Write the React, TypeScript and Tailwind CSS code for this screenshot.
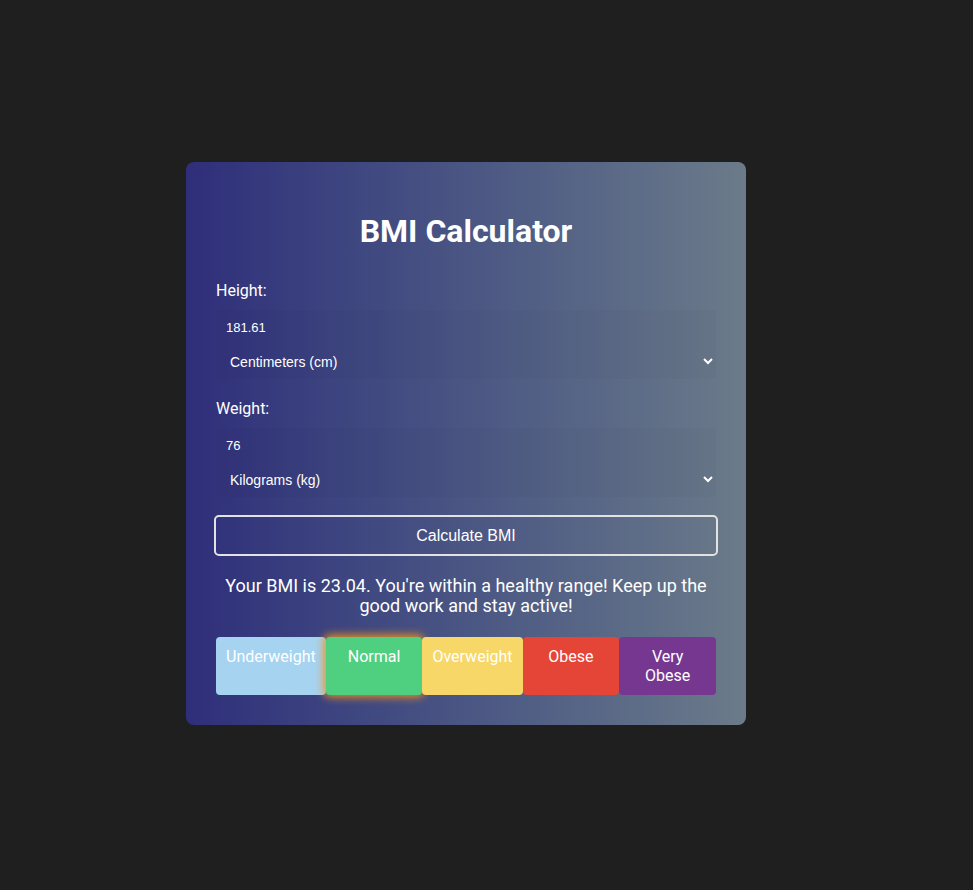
import { useState } from 'react';

const categories = [
  { label: 'Underweight', bg: 'bg-[#a6d3f0]', active: false },
  { label: 'Normal', bg: 'bg-[#4fcf80]', active: true },
  { label: 'Overweight', bg: 'bg-[#f6d767]', active: false },
  { label: 'Obese', bg: 'bg-[#e44536]', active: false },
  { label: 'Very Obese', bg: 'bg-[#753790]', active: false },
];

export default function App() {
  const [height, setHeight] = useState('181.61');
  const [weight, setWeight] = useState('76');

  return (
    <div className="min-h-[890px] w-full bg-[#1f1f1f] flex pl-[186px] pt-[162px] font-['Roboto',sans-serif]">
      <div className="w-[560px] h-[563px] rounded-[8px] bg-gradient-to-r from-[#2f2e7a] to-[#6b7b89] px-[30px] pt-[30px] text-white">
        <h1 className="text-[32px] font-bold text-center leading-[38px] mt-[20px] mb-[31px]">BMI Calculator</h1>

        {/* Height */}
        <label className="block text-[16px] leading-[19px] mb-[10px]">Height:</label>
        <input
          value={height}
          onChange={(e) => setHeight(e.target.value)}
          className="block w-full h-[34px] px-[10px] bg-black/[0.02] rounded-t-[4px] text-[13px] font-['Liberation_Sans',sans-serif] text-white outline-none border-none"
        />
        <select className="block w-full h-[35px] px-[10px] bg-black/[0.02] rounded-b-[4px] text-[14px] font-['Liberation_Sans',sans-serif] text-white outline-none border-none">
          <option className="text-black">Centimeters (cm)</option>
          <option className="text-black">Inches (in)</option>
        </select>

        {/* Weight */}
        <label className="block text-[16px] leading-[19px] mt-[20px] mb-[10px]">Weight:</label>
        <input
          value={weight}
          onChange={(e) => setWeight(e.target.value)}
          className="block w-full h-[34px] px-[10px] bg-black/[0.02] rounded-t-[4px] text-[13px] font-['Liberation_Sans',sans-serif] text-white outline-none border-none"
        />
        <select className="block w-full h-[35px] px-[10px] bg-black/[0.02] rounded-b-[4px] text-[14px] font-['Liberation_Sans',sans-serif] text-white outline-none border-none">
          <option className="text-black">Kilograms (kg)</option>
          <option className="text-black">Pounds (lb)</option>
        </select>

        <button className="block w-[504px] -ml-[2px] h-[41px] mt-[18px] border-2 border-[#e2e2e2] rounded-[5px] bg-transparent text-[16px] font-['Liberation_Sans',sans-serif] text-white">
          Calculate BMI
        </button>

        <p className="text-[18px] leading-[20px] text-center mt-[20px] px-[6px]">
          Your BMI is 23.04. You're within a healthy range! Keep up the good work and stay active!
        </p>

        <div className="flex mt-[21px]">
          {categories.map((c) => (
            <div
              key={c.label}
              className={`flex-1 ${c.bg} rounded-[4px] p-[10px] text-center text-[16px] leading-[19px] ${c.active ? 'shadow-[0_0_8px_2px_#f0901a]' : ''}`}
            >
              {c.label}
            </div>
          ))}
        </div>
      </div>
    </div>
  );
}
